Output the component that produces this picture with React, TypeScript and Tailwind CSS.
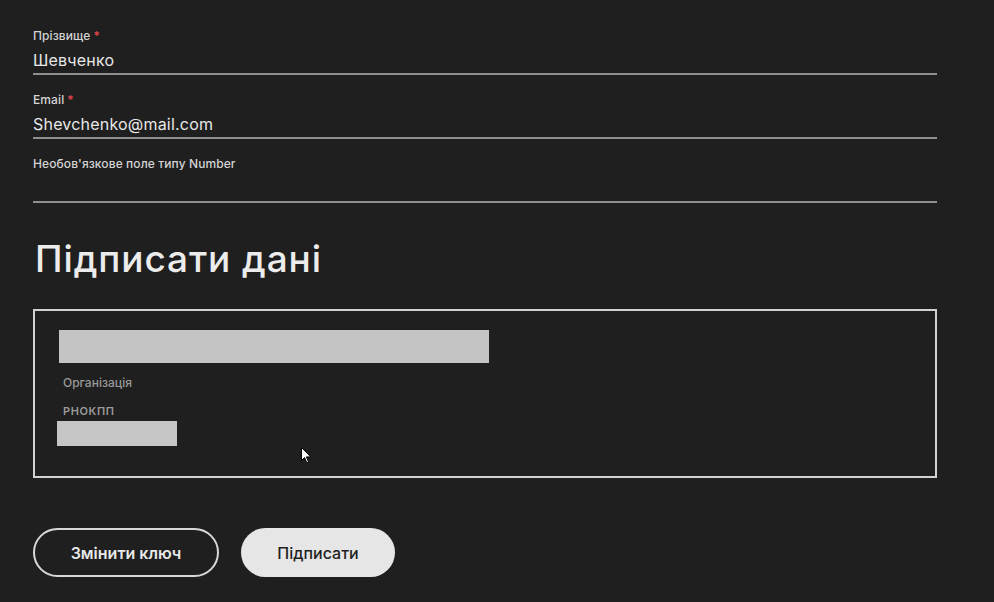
type FieldProps = {
  label: string
  value?: string
  required?: boolean
}

function Field({ label, value, required }: FieldProps) {
  return (
    <div className="border-b-2 border-[#8f8f8f] pb-[1px]">
      <div className="h-[14px] text-[12px] leading-[14px] font-medium tracking-[0.1px] text-[#d4d4d4]">
        {label}
        {required ? <span className="ml-[3px] text-[#e5484d]">*</span> : null}
      </div>
      <div className="mt-[5px] h-[24px] text-[16px] leading-[24px] tracking-[0.2px] text-[#e8e8e8]">{value}</div>
    </div>
  )
}

export default function App() {
  return (
    <div
      className="relative h-[602px] w-[994px] overflow-hidden bg-[#1f1f1f] pl-[33px] pt-[29px]"
      style={{ fontFamily: 'Inter, "Noto Sans", sans-serif' }}
    >
      <div className="flex w-[904px] flex-col gap-[18px]">
        <Field label="Прізвище" value="Шевченко" required />
        <Field label="Email" value="Shevchenko@mail.com" required />
        <Field label="Необов'язкове поле типу Number" />
      </div>

      <h2 className="mt-[35px] h-[42px] pl-[2px] text-[37px] leading-[42px] font-medium tracking-[0.9px] text-[#ececec]">
        Підписати дані
      </h2>

      <div className="mt-[29px] h-[169px] w-[904px] border-2 border-[#d2d2d2] pl-[24px] pt-[19px]">
        <div className="h-[33px] w-[430px] bg-[#c4c4c4]" />
        <div className="mt-[13px] ml-[4px] h-[14px] text-[12px] leading-[14px] font-medium text-[#9a9a9a]">Організація</div>
        <div className="mt-[14px] ml-[4px] h-[14px] text-[11px] leading-[14px] font-semibold tracking-[0.6px] text-[#9a9a9a]">
          РНОКПП
        </div>
        <div className="mt-[3px] -ml-[2px] h-[25px] w-[120px] bg-[#c6c6c6]" />
      </div>

      <div className="mt-[50px] flex gap-[22px]">
        <button className="h-[49px] w-[186px] rounded-full border-2 border-[#d8d8d8] text-[16px] font-semibold text-[#e8e8e8]">
          Змінити ключ
        </button>
        <button className="h-[49px] w-[154px] rounded-full bg-[#e6e6e6] text-[16px] font-medium text-[#1f1f1f]">
          Підписати
        </button>
      </div>

      <svg className="absolute left-[301px] top-[447px]" width="11" height="17" viewBox="0 0 11 17">
        <path d="M0.5 0.5 L0.5 13.5 L3.6 10.6 L5.8 15.8 L7.6 15 L5.4 9.9 L9.8 9.9 Z" fill="white" stroke="black" strokeWidth="1" />
      </svg>
    </div>
  )
}
